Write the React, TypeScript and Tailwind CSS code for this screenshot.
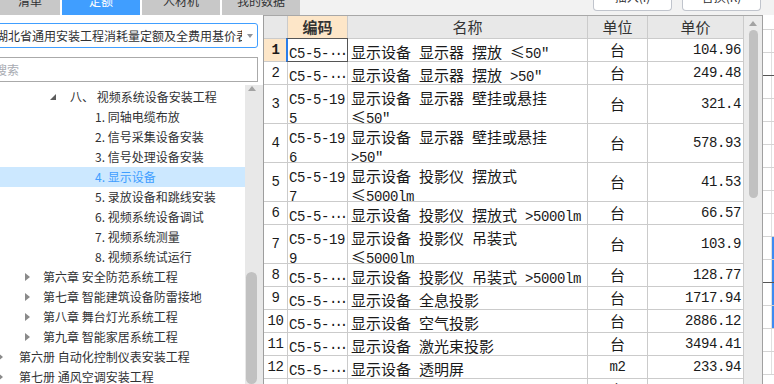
import React from "react";

type Row = { n: number; code: string[]; name: string[]; unit: string; price: string };

const rows: Row[] = [
  { n: 1, code: ["C5-5-⋯"], name: ["显示设备 显示器 摆放 ≤50″"], unit: "台", price: "104.96" },
  { n: 2, code: ["C5-5-⋯"], name: ["显示设备 显示器 摆放 >50″"], unit: "台", price: "249.48" },
  { n: 3, code: ["C5-5-19", "5"], name: ["显示设备 显示器 壁挂或悬挂", "≤50″"], unit: "台", price: "321.4" },
  { n: 4, code: ["C5-5-19", "6"], name: ["显示设备 显示器 壁挂或悬挂", ">50″"], unit: "台", price: "578.93" },
  { n: 5, code: ["C5-5-19", "7"], name: ["显示设备 投影仪 摆放式", "≤5000lm"], unit: "台", price: "41.53" },
  { n: 6, code: ["C5-5-⋯"], name: ["显示设备 投影仪 摆放式 >5000lm"], unit: "台", price: "66.57" },
  { n: 7, code: ["C5-5-19", "9"], name: ["显示设备 投影仪 吊装式", "≤5000lm"], unit: "台", price: "103.9" },
  { n: 8, code: ["C5-5-⋯"], name: ["显示设备 投影仪 吊装式 >5000lm"], unit: "台", price: "128.77" },
  { n: 9, code: ["C5-5-⋯"], name: ["显示设备 全息投影"], unit: "台", price: "1717.94" },
  { n: 10, code: ["C5-5-⋯"], name: ["显示设备 空气投影"], unit: "台", price: "2886.12" },
  { n: 11, code: ["C5-5-⋯"], name: ["显示设备 激光束投影"], unit: "台", price: "3494.41" },
  { n: 12, code: ["C5-5-⋯"], name: ["显示设备 透明屏"], unit: "m2", price: "233.94" },
  { n: 13, code: ["C5-5-⋯"], name: ["显示设备 大屏(拼接设备) 壁挂"], unit: "台", price: "412.06" },
];

// split text into CJK runs and latin runs so each gets its own font
function Mixed({ text }: { text: string }) {
  const parts = text.match(/⋯|[\u4e00-\u9fff\u2264]+|[^\u4e00-\u9fff\u22ef\u2264]+/g) ?? [];
  return (
    <>
      {parts.map((p, i) =>
        p === "⋯" ? (
          <span key={i} className="font-['Liberation_Mono',monospace] text-[14px] tracking-[-3px]">···</span>
        ) : /[\u4e00-\u9fff\u2264]/.test(p) ? (
          <span key={i} className="font-['Noto_Sans_CJK_SC',sans-serif] text-[15px]">{p}</span>
        ) : (
          <span key={i} className="font-['Liberation_Mono','DejaVu_Sans_Mono',monospace] text-[14px] tracking-[-0.4px]">{p}</span>
        )
      )}
    </>
  );
}

function Tab({ label, active, w }: { label: string; active?: boolean; w: string }) {
  return (
    <div className={`${w} h-[15px] overflow-hidden flex justify-center ${active ? "bg-[#409eff] text-white" : "bg-[#c8c8c8] text-[#303133]"}`}>
      <span className="-mt-[7px] text-[12px] leading-[16px]">{label}</span>
    </div>
  );
}

function TopBar() {
  return (
    <div className="h-[15px] shrink-0 flex bg-[#f2f2f2] overflow-hidden">
      <div className="flex gap-[2px] bg-white">
        <Tab w="w-[60px]" label="清单" />
        <Tab w="w-[78px]" label="定额" active />
        <Tab w="w-[78px]" label="人材机" />
        <Tab w="w-[78px]" label="我的数据" />
      </div>
      <div className="flex-1" />
      <div className="w-[79px] h-[11px] border border-t-0 border-[#c0c4cc] rounded-b-[4px] bg-white flex justify-center overflow-hidden">
        <span className="-mt-[11px] text-[12px] leading-[16px] text-[#303133]">插入(I)</span>
      </div>
      <div className="w-[10px]" />
      <div className="w-[79px] h-[11px] border border-t-0 border-[#c0c4cc] rounded-b-[4px] bg-white flex justify-center overflow-hidden">
        <span className="-mt-[11px] text-[12px] leading-[16px] text-[#303133]">替换(R)</span>
      </div>
      <div className="w-[13px]" />
    </div>
  );
}

function Open() {
  return (
    <svg width="6" height="6" viewBox="0 0 6 6" className="shrink-0">
      <path d="M6 0 L6 6 L0 6 Z" fill="#5c5c5c" />
    </svg>
  );
}

function Closed() {
  return (
    <svg width="5" height="8" viewBox="0 0 5 8" className="shrink-0">
      <path d="M0 0 L5 4 L0 8 Z" fill="#8a8a8a" />
    </svg>
  );
}

function LeftPanel() {
  const items = ["1. 同轴电缆布放", "2. 信号采集设备安装", "3. 信号处理设备安装", "4. 显示设备", "5. 录放设备和跳线安装", "6. 视频系统设备调试", "7. 视频系统测量", "8. 视频系统试运行"];
  const chapters = ["第六章 安全防范系统工程", "第七章 智能建筑设备防雷接地", "第八章 舞台灯光系统工程", "第九章 智能家居系统工程"];
  const books = ["第六册 自动化控制仪表安装工程", "第七册 通风空调安装工程"];
  return (
    <div className="w-[264px] shrink-0 border-r border-[#9e9e9e] bg-white flex flex-col overflow-hidden">
      <div className="mt-[8px] ml-[-10px] w-[268px] h-[25px] shrink-0 border border-[#409eff] rounded-[3px] flex items-center pl-[5px] text-[12px] text-[#303133]">
        <span className="w-[246px] whitespace-nowrap overflow-hidden">湖北省通用安装工程消耗量定额及全费用基价表</span>
        <div className="flex-1 flex justify-center">
          <svg width="6" height="4" viewBox="0 0 6 4">
            <path d="M0 0 L6 0 L3 4 Z" fill="#909399" />
          </svg>
        </div>
      </div>
      <div className="mt-[9px] ml-[-10px] w-[268px] h-[25px] shrink-0 border border-[#aaaaaa] flex items-center pl-[4px] text-[12px] text-[#a8abb2]">搜索</div>
      <div className="mt-[3px] flex flex-1 min-h-0">
        <div className="w-[245px] pt-[2px] text-[12px] leading-[20px] text-[#303133] whitespace-nowrap">
          <div className="h-[20px] flex items-center pl-[50px]">
            <Open />
            <span className="ml-[14px]">八、 视频系统设备安装工程</span>
          </div>
          {items.map((t, i) => (
            <div key={t} className={`h-[20px] pl-[95px] ${i === 3 ? "bg-[#cce8ff] text-[#409eff]" : ""}`}>{t}</div>
          ))}
          {chapters.map((t) => (
            <div key={t} className="h-[20px] flex items-center pl-[25px]">
              <Closed />
              <span className="ml-[13px]">{t}</span>
            </div>
          ))}
          {books.map((t) => (
            <div key={t} className="h-[20px] flex items-center">
              <span className="-ml-[2px]"><Closed /></span>
              <span className="ml-[16px]">{t}</span>
            </div>
          ))}
        </div>
        <div className="w-[18px] bg-[#e8e8e8] flex flex-col">
          <div className="h-[12px] flex items-center pl-[3px]">
            <svg width="8" height="5" viewBox="0 0 8 5">
              <path d="M0 5 L4 0 L8 5 Z" fill="#a3a3a3" />
            </svg>
          </div>
          <div className="mt-[180px] ml-[1px] w-[11px] h-[200px] rounded-full bg-[#c1c1c1]" />
        </div>
      </div>
    </div>
  );
}

const line = "border-r border-[#cbcbcb]";
const mono = "font-['Liberation_Mono','DejaVu_Sans_Mono',monospace] text-[14px] tracking-[-0.4px]";

function Table() {
  return (
    <div className="w-[480px] shrink-0 flex flex-col bg-white border-t border-[#a8a8a8] text-[#1a1a1a]">
      <div className="h-[23px] shrink-0 flex border-b border-[#cbcbcb] bg-[#e8e8e8] font-['Noto_Sans_CJK_SC',sans-serif] text-[15px] text-[#333]">
        <div className={`w-[24px] ${line}`} />
        <div className={`w-[60px] ${line} bg-[#fde6c8] flex items-center justify-center font-bold`}>编码</div>
        <div className={`w-[240px] ${line} flex items-center justify-center`}>名称</div>
        <div className={`w-[60px] ${line} flex items-center justify-center`}>单位</div>
        <div className={`w-[96px] ${line} flex items-center justify-center`}>单价</div>
      </div>
      {rows.map((r) => {
        const two = r.name.length > 1;
        return (
          <div key={r.n} className={`${two ? "h-[39px]" : "h-[23px]"} shrink-0 flex border-b border-[#cbcbcb] leading-[16px]`}>
            <div className={`w-[24px] ${line} flex items-center justify-center ${mono} ${r.n === 1 ? "bg-[#fde6c8] font-bold" : ""}`}>{r.n}</div>
            <div className={`relative w-[60px] ${line} pl-[1px] pt-[4px] whitespace-nowrap`}>
              {r.code.map((c) => (
                <div key={c}><Mixed text={c} /></div>
              ))}
              {r.n === 1 && <div className="absolute -top-px -bottom-px -left-[2px] -right-px border border-[#555] border-l-2 border-l-[#2b7de9]" />}
            </div>
            <div className={`w-[240px] ${line} pl-[3px] pt-[4px] whitespace-nowrap overflow-hidden`}>
              {r.name.map((c) => (
                <div key={c}><Mixed text={c} /></div>
              ))}
            </div>
            <div className={`w-[60px] ${line} flex items-center justify-center`}><Mixed text={r.unit} /></div>
            <div className={`w-[96px] ${line} flex items-center justify-end pr-[2px]`}><Mixed text={r.price} /></div>
          </div>
        );
      })}
    </div>
  );
}

function TableScroll() {
  return (
    <div className="w-[18px] shrink-0 bg-[#ebebeb] border-t border-[#a8a8a8] flex flex-col items-center">
      <div className="h-[14px] flex items-center">
        <svg width="8" height="5" viewBox="0 0 8 5">
          <path d="M0 5 L4 0 L8 5 Z" fill="#a3a3a3" />
        </svg>
      </div>
      <div className="w-[9px] h-[168px] rounded-full bg-[#c1c1c1]" />
    </div>
  );
}

function Strip() {
  const cells = Array.from({ length: 15 }, (_, i) => i);
  return (
    <div className="w-[12px] shrink-0 border-l border-[#a0a0a0] bg-white flex flex-col">
      <div className="h-[15px] shrink-0 border-b border-[#d4d4d4]" />
      {cells.map((i) => (
        <div key={i} className={`h-[23px] shrink-0 border-b ${i === 1 || i === 10 ? "border-[#555]" : "border-[#d4d4d4]"} flex`}>
          <div className="w-[9px] border-r border-[#e0e0e0]" />
          {i >= 9 && i <= 12 && <div className="w-[2px] bg-[#3d8bf2]" />}
        </div>
      ))}
    </div>
  );
}

export default function App() {
  return (
    <div className="w-[774px] h-[384px] overflow-hidden flex flex-col bg-white text-[#303133] font-['Noto_Sans_CJK_SC','Noto_Sans',sans-serif]">
      <TopBar />
      <div className="flex flex-1 min-h-0">
        <LeftPanel />
        <Table />
        <TableScroll />
        <Strip />
      </div>
    </div>
  );
}
